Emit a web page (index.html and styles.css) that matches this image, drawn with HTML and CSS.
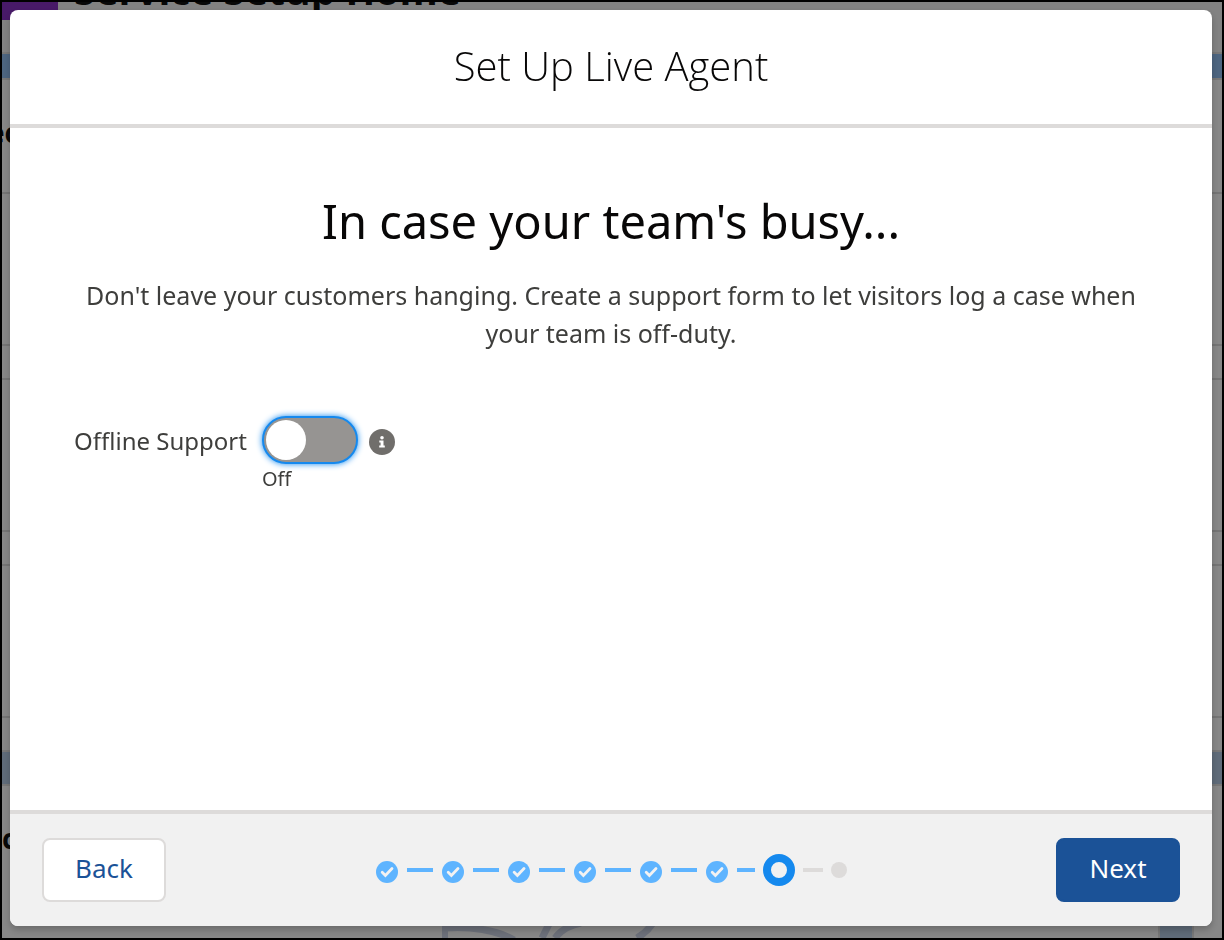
FILE: index.html
```html
<!DOCTYPE html>
<html lang="en">
  <head>
    <meta charset="UTF-8" />
    <meta name="viewport" content="width=device-width, initial-scale=1.0" />
    <title>Set Up Live Agent</title>
    <link rel="stylesheet" href="styles.css">
  </head>
  <body>
    <!-- Setup page under the dialog -->
    <div class="page" aria-hidden="true">
      <div class="page-header">
        <div class="page-icon"></div>
        <div class="page-title">Service Setup Home</div>
      </div>
      <div class="band sky"></div>
      <div class="card-title">ec</div>
      <div class="row"></div>
      <div class="row-gap"></div>
      <div class="row"></div>
      <div class="row-gap"></div>
      <div class="row"></div>
      <div class="row-gap last"></div>
      <div class="band"></div>
      <div class="card-title lower">c</div>
      <div class="page-bottom">
        <svg class="doodle" width="220" height="14" viewBox="0 0 220 14" fill="none" stroke="#6c707a" stroke-width="7">
          <path d="M3 4c25-2 52 2 69 12M100 14l8-16M113 14c6-8 15-13 26-15M195 14c7-4 12-9 16-15" />
          <path d="M0 0h6v14H0z" fill="#6c707a" stroke="none" />
        </svg>
        <div class="stripe"></div>
      </div>
    </div>

    <div class="modal" role="dialog" aria-labelledby="modalTitle">
      <div class="modal-header">
        <h1 id="modalTitle">Set Up Live Agent</h1>
      </div>

      <div class="modal-content">
        <h2>In case your team's busy...</h2>
        <p class="intro">Don't leave your customers hanging. Create a support form to let visitors log a case when your team is off-duty.</p>

        <div class="field">
          <label for="offline">Offline Support</label>
          <div class="toggle-wrap">
            <input type="checkbox" class="toggle" id="offline" role="switch" />
            <span class="state">Off</span>
          </div>
          <button class="info" type="button" aria-label="Help">
            <svg width="26" height="26" viewBox="0 0 26 26">
              <circle cx="13" cy="13" r="13" fill="#706e6b" />
              <circle cx="13" cy="8.7" r="1.8" fill="#fff" />
              <path d="M10.3 11.6h4.2v5h1.3v1.8h-5.6v-1.8h1.4v-3.2h-1.3z" fill="#fff" />
            </svg>
          </button>
        </div>
      </div>

      <div class="modal-footer">
        <button class="btn" type="button">Back</button>

        <svg width="0" height="0" class="defs">
          <symbol id="check" viewBox="0 0 24 26">
            <circle cx="12" cy="15" r="11" fill="#5eb4ff" />
            <path d="M7.2 15.2l3.2 3.3 6.6-7" fill="none" stroke="#f3f2f2" stroke-width="2.8" stroke-linecap="round" />
          </symbol>
        </svg>
        <div class="progress">
          <svg class="done"><use href="#check" /></svg>
          <span class="line"></span>
          <svg class="done"><use href="#check" /></svg>
          <span class="line"></span>
          <svg class="done"><use href="#check" /></svg>
          <span class="line"></span>
          <svg class="done"><use href="#check" /></svg>
          <span class="line"></span>
          <svg class="done"><use href="#check" /></svg>
          <span class="line"></span>
          <svg class="done"><use href="#check" /></svg>
          <span class="line short"></span>
          <span class="current"></span>
          <span class="line todo"></span>
          <span class="dot"></span>
        </div>

        <button class="btn brand" type="button">Next</button>
      </div>
    </div>
  </body>
</html>
```

FILE: styles.css
```css
* {
  box-sizing: border-box;
}

body {
  margin: 0;
  height: 100vh;
  border: 2px solid #000;
  overflow: hidden;
  font-family: 'Noto Sans', 'Open Sans', sans-serif;
  color: #3e3e3c;
  background: #878787;
}

/* dimmed page */
.page {
  display: flex;
  flex-direction: column;
  height: 100%;
  overflow: hidden;
  color: #080808;
}

.page-header {
  display: flex;
  gap: 16px;
  height: 50px;
  flex-shrink: 0;
  background: #828282;
}

.page-icon {
  width: 56px;
  height: 18px;
  background: #481a68;
}

.page-title {
  margin-top: -36px;
  font: bold 39px/48px 'Open Sans', sans-serif;
}

.band {
  height: 36px;
  flex-shrink: 0;
  background: #5f6b79;
  border: solid #777;
  border-width: 2px 0;
}

.band.sky {
  height: 28px;
  background: #4d6580;
}

.card-title {
  height: 114px;
  flex-shrink: 0;
  padding-top: 34px;
  border-bottom: 2px solid #757575;
  font: bold 28px/36px 'Open Sans', sans-serif;
  text-indent: -14px;
}

.card-title.lower {
  height: 138px;
  border: 0;
  text-indent: 0;
}

.row {
  height: 152px;
  flex-shrink: 0;
  border-bottom: 2px solid #757575;
}

.row-gap {
  height: 34px;
  flex-shrink: 0;
  border-bottom: 2px solid #757575;
}

.row-gap.last {
  height: 32px;
  border: 0;
}

.page-bottom {
  display: flex;
  justify-content: space-between;
  padding: 0 28px 0 440px;
}

.stripe {
  width: 36px;
  background: #5f6b79;
  border: solid #777;
  border-width: 0 2px;
}

/* dialog */
.modal {
  position: fixed;
  top: 10px;
  right: 12px;
  bottom: 14px;
  left: 10px;
  display: flex;
  flex-direction: column;
  background: #fff;
  border-radius: 8px;
  box-shadow: 0 4px 6px rgba(0, 0, 0, 0.2);
}

.modal-header {
  padding: 28px 32px 30px;
  border-bottom: 4px solid #dddbda;
  text-align: center;
}

h1 {
  margin: 0;
  font: 300 40px/56px 'Open Sans', sans-serif;
  color: #080707;
}

.modal-content {
  flex: 1;
  padding: 64px;
}

h2 {
  margin: 0 0 26px;
  font-size: 47px;
  font-weight: 400;
  line-height: 58px;
  text-align: center;
  color: #080707;
}

.intro {
  margin: 0 0 64px;
  font-size: 25px;
  line-height: 38px;
  text-align: center;
}

.field {
  display: flex;
  align-items: flex-start;
}

.field label {
  margin-right: 15px;
  font-size: 24px;
  line-height: 50px;
}

.toggle-wrap {
  display: flex;
  flex-direction: column;
}

.toggle {
  appearance: none;
  width: 96px;
  height: 48px;
  margin: 0;
  padding: 2px;
  border: 2px solid #1589ee;
  border-radius: 24px;
  background: #969492;
  box-shadow: 0 0 6px #1589ee;
}

.toggle::before {
  content: "";
  display: block;
  width: 40px;
  height: 40px;
  border-radius: 50%;
  background: #fff;
}

.toggle:checked {
  background: #0070d2;
}

.toggle:checked::before {
  margin-left: auto;
}

.state {
  font-size: 20px;
  line-height: 30px;
}

.info {
  display: flex;
  margin: 13px 0 0 11px;
  padding: 0;
  border: 0;
  background: none;
}

.modal-footer {
  display: flex;
  align-items: center;
  justify-content: space-between;
  padding: 24px 32px;
  border-top: 4px solid #dddbda;
  border-radius: 0 0 8px 8px;
  background: #f1f1f1;
}

.btn {
  width: 124px;
  height: 64px;
  padding: 0 0 4px;
  border: 2px solid #dddbda;
  border-radius: 8px;
  background: #fff;
  color: #1b5297;
  font: 26px/36px 'Noto Sans', 'Open Sans', sans-serif;
}

.btn.brand {
  border-color: #1b5297;
  background: #1b5297;
  color: #fff;
}

.defs {
  position: absolute;
}

/* step indicator */
.progress {
  display: flex;
  align-items: center;
  gap: 8px;
}

.done {
  width: 24px;
  height: 26px;
}

.line {
  width: 26px;
  height: 4px;
  background: #5eb4ff;
}

.line.short {
  width: 18px;
}

.line.todo {
  width: 20px;
  background: #dddbda;
}

.current {
  width: 32px;
  height: 32px;
  border: 8px solid #1589ee;
  border-radius: 50%;
}

.dot {
  width: 16px;
  height: 16px;
  border-radius: 50%;
  background: #dddbda;
}
```
